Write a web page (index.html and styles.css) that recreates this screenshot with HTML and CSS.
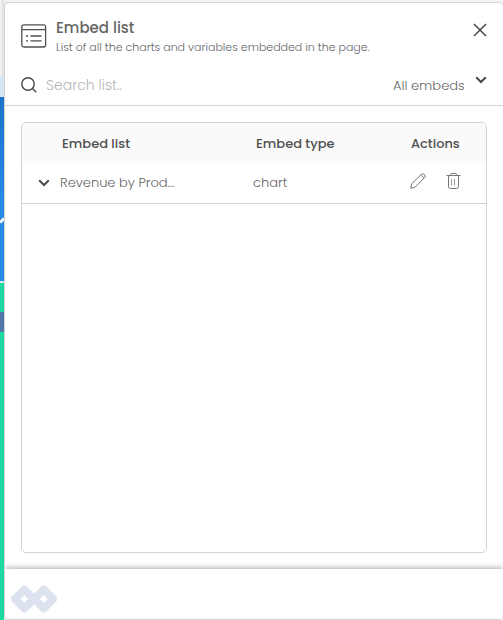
FILE: index.html
```html
<!DOCTYPE html>
<html lang="en">
<head>
  <meta charset="UTF-8">
  <meta name="viewport" content="width=device-width, initial-scale=1.0">
  <title>Embed list</title>
  <link rel="stylesheet" href="styles.css">
</head>
<body>

  <!-- Edge of the page behind the panel -->
  <div class="page-edge">
    <div class="edge-top"></div>
    <div class="edge-pale"></div>
    <div class="edge-blue">
      <svg width="4" height="8" viewBox="0 0 4 8"><path d="M0 5.5 4 1.5" stroke="#fff" stroke-width="3"/></svg>
    </div>
    <div class="edge-green"></div>
    <div class="edge-slate"></div>
    <div class="edge-green edge-fill"></div>
  </div>

  <main class="panel">
    <!-- Header -->
    <header class="panel-header">
      <svg class="list-icon" width="26" height="24" viewBox="0 0 26 24" fill="none" stroke="#505050" stroke-width="1.3">
        <rect x="0.8" y="0.8" width="23.8" height="22.2" rx="2"/>
        <path d="M1 5.7h23.500M5 12h2M9.500 12h11M5 16.800h2M9.500 16.800h11"/>
      </svg>
      <div class="heading">
        <h1>Embed list</h1>
        <p>List of all the charts and variables embedded in the page.</p>
      </div>
      <button class="icon-btn" type="button" aria-label="Close">
        <svg width="14" height="14" viewBox="0 0 14 14" fill="none" stroke="#484848" stroke-width="1.5"><path d="M1 1l12 12M13 1 1 13"/></svg>
      </button>
    </header>

    <!-- Search and filter -->
    <div class="toolbar">
      <label for="search" aria-label="Search list">
        <svg width="16" height="16" viewBox="0 0 16 16" fill="none" stroke="#484848" stroke-width="1.4"><circle cx="7" cy="7" r="6.200"/><path d="M11.500 11.500 15.200 15.200"/></svg>
      </label>
      <input id="search" type="text" placeholder="Search list..">
      <div class="filter">
        <select aria-label="Filter embeds">
          <option>All embeds</option>
        </select>
        <svg width="12" height="8" viewBox="0 0 12 8" fill="none" stroke="#484848" stroke-width="2"><path d="M1.200 1.300 6 6l4.800-4.700"/></svg>
      </div>
    </div>

    <!-- Embeds -->
    <section class="content">
      <div class="table-box">
        <table>
          <thead>
            <tr>
              <th class="col-name">Embed list</th>
              <th class="col-type">Embed type</th>
              <th class="col-actions">Actions</th>
            </tr>
          </thead>
          <tbody>
            <tr>
              <td>
                <div class="name-cell">
                  <button class="icon-btn" type="button" aria-label="Expand">
                    <svg width="12" height="8" viewBox="0 0 12 8" fill="none" stroke="#484848" stroke-width="2"><path d="M1.200 1.300 6 6l4.800-4.700"/></svg>
                  </button>
                  <span>Revenue by Prod...</span>
                </div>
              </td>
              <td>chart</td>
              <td>
                <div class="actions">
                  <button class="icon-btn" type="button" aria-label="Edit">
                    <svg width="16" height="16" viewBox="0 0 16 16" fill="none" stroke="#777" stroke-width="1" stroke-linejoin="round"><path d="M.7 15.300 1.700 10.800 11.300 1.300Q12.800-.1 14.500 1.500 16 3.100 14.600 4.600L5.100 14.200ZM10.700 1.900l3.300 3.300"/></svg>
                  </button>
                  <button class="icon-btn" type="button" aria-label="Delete">
                    <svg width="15" height="16" viewBox="0 0 15 16" fill="none" stroke="#777"><path d="M.5 2.500h14M4.500 2.500v-1q0-1 1-1h4q1 0 1 1v1M2.500 2.500v11q0 2 2 2h6q2 0 2-2v-11"/><path d="M5.500 6v6.500M8.500 6v6.500" stroke="#999"/></svg>
                  </button>
                </div>
              </td>
            </tr>
          </tbody>
        </table>
      </div>
    </section>

    <footer class="panel-footer">
      <svg width="46" height="28" viewBox="0 0 46 28" fill="none" stroke="#dce3ef" stroke-width="8" stroke-linejoin="round">
        <path d="M13.300 4.500 22.800 14 13.300 23.500 3.800 14Z"/>
        <path d="M32.700 4.500 42.200 14 32.700 23.500 23.200 14Z"/>
      </svg>
    </footer>
  </main>

</body>
</html>
```

FILE: styles.css
```css
* {
  box-sizing: border-box;
}

body {
  margin: 0;
  min-height: 100vh;
  display: flex;
  background: #f3f3f3;
  color: #666;
  font-family: Poppins, Inter, sans-serif;
  font-size: 13px;
  font-weight: 300;
}

/* Page behind the panel */
.page-edge {
  width: 4px;
  display: flex;
  flex-direction: column;
}

.edge-top {
  height: 77px;
  background: linear-gradient(90deg, #f5f5f5, #dedede);
}

.edge-pale {
  height: 20px;
  background: #d6e5ef;
}

.edge-blue {
  height: 186px;
  padding-top: 120px;
  background: linear-gradient(#1b72cc, #278be5 60%);
  border-bottom: 2px solid #d3e6f2;
}

.edge-blue svg {
  display: block;
}

.edge-green {
  height: 29px;
  background: #1bd99f;
}

.edge-slate {
  height: 20px;
  background: #5077a8;
}

.edge-fill {
  height: auto;
  flex: 1;
}

/* Panel */
.panel {
  flex: 1;
  min-width: 0;
  margin-top: 2px;
  display: flex;
  flex-direction: column;
  overflow: hidden;
  background: #fff;
  border: 1px solid #d3d3d3;
  border-right: 0;
  border-radius: 5px;
}

.panel-header {
  display: flex;
  align-items: flex-start;
  padding: 15px 16px 0;
  height: 62px;
}

.list-icon {
  flex: none;
  margin-top: 6px;
  margin-right: 9px;
}

.heading {
  flex: 1;
}

h1 {
  margin: 0;
  font-size: 15px;
  line-height: 20px;
  font-weight: 500;
  color: #666;
}

.heading p {
  margin: 0;
  font-size: 11px;
  line-height: 18px;
  color: #666;
}

.icon-btn {
  padding: 0;
  border: 0;
  background: none;
  cursor: pointer;
}

.icon-btn svg {
  display: block;
}

.panel-header .icon-btn {
  margin-top: 5px;
}

.toolbar {
  height: 41px;
  display: flex;
  align-items: center;
  padding: 0 16px;
  border-bottom: 1px solid #d3d3d3;
}

.toolbar label svg {
  display: block;
}

.toolbar input {
  flex: 1;
  min-width: 0;
  margin-left: 9px;
  padding: 0;
  border: 0;
  outline: 0;
  background: none;
  font: inherit;
  font-size: 14px;
}

.toolbar input::placeholder {
  color: #b5b5b5;
}

.filter {
  display: flex;
  align-items: center;
  gap: 10px;
}

.filter select {
  appearance: none;
  padding: 0;
  border: 0;
  background: none;
  font: inherit;
  color: inherit;
}

.filter svg {
  margin-bottom: 10px;
}

/* Table */
.content {
  flex: 1;
  display: flex;
  padding: 16px;
}

.table-box {
  flex: 1;
  border: 1px solid #d3d3d3;
  border-radius: 5px;
  overflow: hidden;
}

table {
  width: 100%;
  table-layout: fixed;
  border-collapse: collapse;
}

th,
td {
  height: 40px;
  padding: 0;
  text-align: left;
}

th {
  padding-top: 2px;
  background: #fafafa;
  font-weight: 500;
  color: #505050;
}

td {
  border-bottom: 1px solid #d3d3d3;
}

.col-name {
  width: 231px;
  padding-left: 40px;
}

.col-type {
  padding-left: 3px;
}

.col-actions {
  width: 76px;
  padding-left: 1px;
}

.name-cell {
  display: flex;
  align-items: center;
  gap: 10px;
  padding-left: 16px;
}

.actions {
  display: flex;
  gap: 20px;
  padding-bottom: 4px;
}

/* Footer */
.panel-footer {
  height: 50px;
  display: flex;
  align-items: center;
  padding: 9px 6px 0;
  box-shadow: 0 -1px 6px #aaa8b4;
}
```
